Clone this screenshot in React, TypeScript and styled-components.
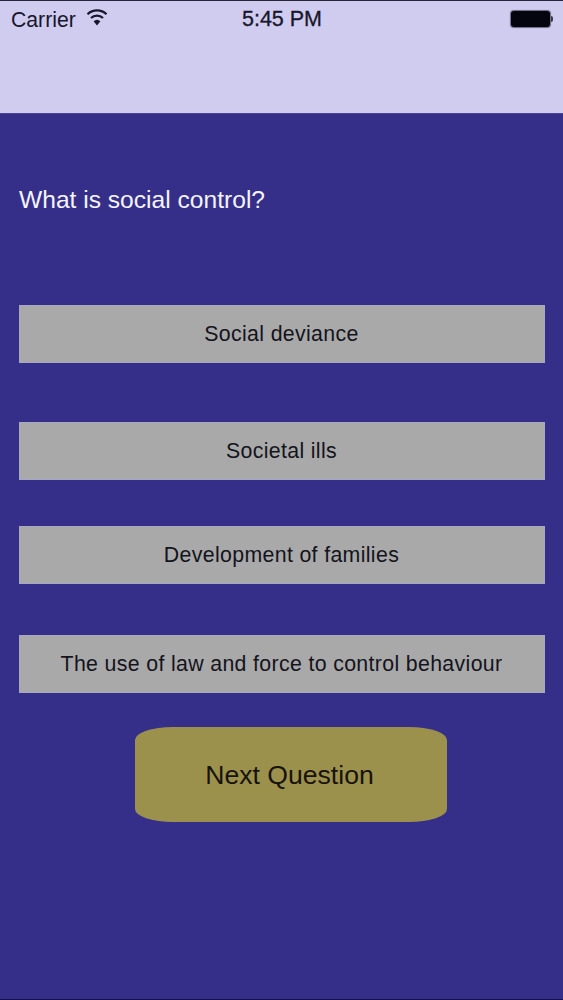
import { createGlobalStyle, styled } from 'styled-components';

const answers = [
  { label: 'Social deviance', gapAfter: 59 },
  { label: 'Societal ills', gapAfter: 46 },
  { label: 'Development of families', gapAfter: 51 },
  { label: 'The use of law and force to control behaviour', gapAfter: 34 },
];

const GlobalStyle = createGlobalStyle`
  html, body {
    margin: 0;
    padding: 0;
    background: #352f8a;
  }
  * {
    box-sizing: border-box;
  }
`;

const App = () => {
  return (
    <Page>
      <GlobalStyle />
      <Header>
        <StatusBar>
          <Carrier>
            Carrier
            <svg width="22" height="18" viewBox="0 0 22 18" aria-hidden="true">
              <path d="M1.5 6.2a13.6 13.6 0 0 1 19 0" fill="none" stroke="#17162a" strokeWidth="2.2" />
              <path d="M5 10a8.6 8.6 0 0 1 12 0" fill="none" stroke="#17162a" strokeWidth="2.2" />
              <path d="M11 17.5 7.6 13.3a5 5 0 0 1 6.8 0Z" fill="#17162a" />
            </svg>
          </Carrier>
          <Clock>5:45 PM</Clock>
          <Battery>
            <BatteryBody />
            <BatteryTip />
          </Battery>
        </StatusBar>
      </Header>
      <Content>
        <Question>What is social control?</Question>
        {answers.map((answer) => (
          <AnswerButton key={answer.label} $gapAfter={answer.gapAfter}>
            {answer.label}
          </AnswerButton>
        ))}
        <NextButton>Next Question</NextButton>
      </Content>
      <BottomLine />
    </Page>
  );
};

const Page = styled.div`
  display: flex;
  flex-direction: column;
  width: 563px;
  height: 1000px;
  overflow: hidden;
  border-top: 1px solid #26243a;
  background: #352f8a;
  font-family: 'Liberation Sans', Arial, sans-serif;
`;

const Header = styled.header`
  flex: none;
  height: 113px;
  border-bottom: 1px solid #4a4596;
  background: #cfccf0;
`;

const StatusBar = styled.div`
  display: grid;
  grid-template-columns: 1fr auto 1fr;
  align-items: center;
  height: 37px;
  padding: 0 10px 0 11px;
  color: #17162a;
`;

const Carrier = styled.div`
  display: flex;
  align-items: center;
  gap: 10px;
  font-size: 21.2px;

  svg {
    margin-top: -5px;
  }
`;

const Clock = styled.div`
  font-size: 21.5px;
  font-weight: 500;
  -webkit-text-stroke: 0.3px #17162a;
`;

const Battery = styled.div`
  display: flex;
  align-items: center;
  justify-content: flex-end;
`;

const BatteryBody = styled.div`
  width: 39px;
  height: 16px;
  margin-top: -2px;
  border-radius: 3px;
  background: #050510;
  box-shadow: 0 0 1px 1px #6b6a80;
`;

const BatteryTip = styled.div`
  width: 2px;
  height: 6px;
  margin-top: -2px;
  margin-left: 1px;
  border-radius: 0 2px 2px 0;
  background: #3a3950;
`;

const Content = styled.main`
  flex: 1;
  display: flex;
  flex-direction: column;
  padding: 72px 18px 0 19px;
`;

const Question = styled.h1`
  height: 119px;
  margin: 0;
  color: #f4f4fa;
  font-size: 24.6px;
  font-weight: 400;
  line-height: 27px;
`;

const AnswerButton = styled.button<{ $gapAfter: number }>`
  flex: none;
  width: 526px;
  height: 58px;
  margin: 0 0 ${({ $gapAfter }) => $gapAfter}px;
  padding: 1px 1px 0 0;
  border: 1px solid #a6a7c0;
  background: #a9a9a9;
  color: #14141c;
  font-family: inherit;
  font-size: 21.3px;
  letter-spacing: 0.35px;
`;

const NextButton = styled.button`
  flex: none;
  align-self: flex-start;
  width: 312px;
  height: 95px;
  margin-left: 116px;
  padding: 2px 3px 0 0;
  border: none;
  border-radius: 38px / 13px;
  background: #9c914c;
  color: #17130c;
  font-family: inherit;
  font-size: 26.6px;
`;

const BottomLine = styled.div`
  flex: none;
  height: 1px;
  background: #14124a;
`;

export default App;
